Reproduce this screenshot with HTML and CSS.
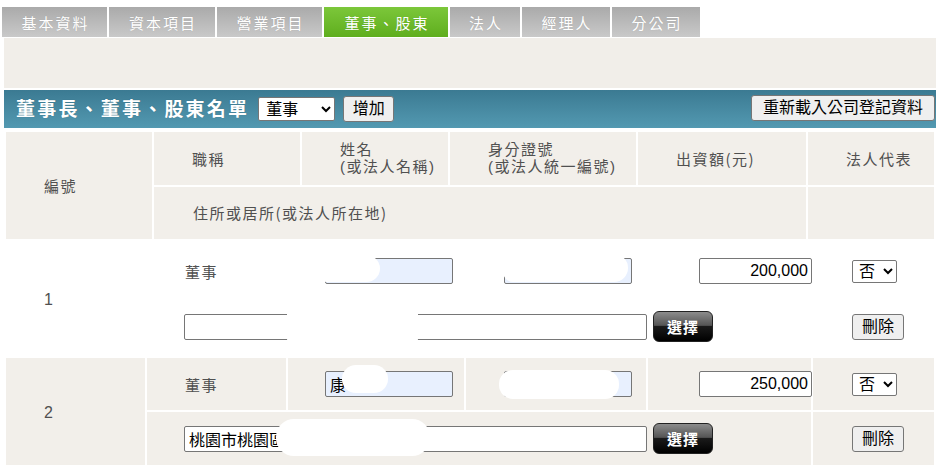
FILE: index.html
```html
<!DOCTYPE html>
<html lang="zh-Hant">
<head>
<meta charset="utf-8">
<title>董事、股東</title>
<link rel="stylesheet" href="styles.css">
</head>
<body>
<div class="tabs">
  <div class="tab tab-a">基本資料</div>
  <div class="tab tab-b">資本項目</div>
  <div class="tab tab-a">營業項目</div>
  <div class="tab tab-c tab-active">董事、股東</div>
  <div class="tab tab-d">法人</div>
  <div class="tab tab-e">經理人</div>
  <div class="tab tab-e">分公司</div>
</div>
<div class="main">
  <div class="band"></div>
  <div class="bar">
    <div class="bar-left">
      <span class="bar-title">董事長、董事、股東名單</span>
      <select class="sel sel-role"><option>董事</option></select>
      <button class="btn btn-add">增加</button>
    </div>
    <button class="btn btn-reload">重新載入公司登記資料</button>
  </div>
  <div class="table">
    <div class="head">
      <div class="hc hc-no">編號</div>
      <div class="hc">職稱</div>
      <div class="hc hc-2l">姓名<br>(或法人名稱)</div>
      <div class="hc hc-2l">身分證號<br>(或法人統一編號)</div>
      <div class="hc">出資額(元)</div>
      <div class="hc">法人代表</div>
      <div class="hc hc-addr">住所或居所(或法人所在地)</div>
      <div class="hc"></div>
    </div>

    <div class="rec rec-white rec-1">
      <div class="dc dc-no">1</div>
      <div class="dc">董事</div>
      <div class="dc"><input class="inp inp-name" value=""><span class="blob b1-name"></span></div>
      <div class="dc"><input class="inp inp-id" value=""><span class="blob b1-id"></span></div>
      <div class="dc"><input class="inp inp-amt" value="200,000"></div>
      <div class="dc"><select class="sel sel-yn"><option>否</option></select></div>
      <div class="dc dc-addr"><input class="inp inp-addr" value=""><span class="blob b1-addr"></span><button class="btn-pick">選擇</button></div>
      <div class="dc dc-del"><button class="btn btn-del">刪除</button></div>
    </div>

    <div class="rec rec-gray rec-2">
      <div class="dc dc-no">2</div>
      <div class="dc">董事</div>
      <div class="dc"><input class="inp inp-name" value="康"><span class="blob b2-name"></span></div>
      <div class="dc"><input class="inp inp-id" value=""><span class="blob b2-id"></span></div>
      <div class="dc"><input class="inp inp-amt" value="250,000"></div>
      <div class="dc"><select class="sel sel-yn"><option>否</option></select></div>
      <div class="dc dc-addr"><input class="inp inp-addr" value="桃園市桃園區"><span class="blob b2-addr"></span><button class="btn-pick">選擇</button></div>
      <div class="dc dc-del"><button class="btn btn-del">刪除</button></div>
    </div>
  </div>
</div>
</body>
</html>
```
FILE: styles.css
```css
* { box-sizing: border-box; }
html, body { background: #fff; }
body {
  margin: 0;
  padding: 7px 0 0 2px;
  font-family: "Noto Sans CJK TC", "Noto Sans", sans-serif;
  color: #555;
}
.tabs { display: flex; gap: 2px; height: 30px; }
.tab {
  height: 30px;
  display: flex;
  align-items: center;
  justify-content: center;
  padding-left: 2px;
  color: #fff;
  font-size: 15px;
  letter-spacing: 2px;
  background: linear-gradient(#aaaaaa, #c9c9c9);
  text-shadow: 0 0 1px rgba(0,0,0,0.15);
}
.tab-a { width: 105px; }
.tab-b { width: 106px; }
.tab-c { width: 124px; }
.tab-d { width: 70px; }
.tab-e { width: 88px; }
.tab-active { background: linear-gradient(#7cc73a, #5fae1e); }
.main { margin: 1px 0 0 2px; width: 932px; }
.band { height: 50px; background: #f1eee9; }
.bar {
  margin-top: 2px;
  height: 38px;
  background: linear-gradient(#3b7a92, #5399b1);
  display: flex;
  align-items: center;
  justify-content: space-between;
  padding: 0 1px 0 12px;
}
.bar-left { display: flex; align-items: center; }
.bar-title {
  color: #fff;
  font-size: 19px;
  font-weight: bold;
  letter-spacing: 2.2px;
  margin-right: 9px;
  margin-top: -4px;
  text-shadow: 0 0 1px rgba(0,0,0,0.25);
}
.sel {
  font-family: "Liberation Sans", "Noto Sans CJK TC", sans-serif;
  font-size: 16px;
  color: #000;
  background: #fff;
  border: 1px solid #767676;
  border-radius: 2px;
  height: 24px;
  padding: 0 0 0 3px;
}
.sel-role { width: 77px; margin-right: 8px; }
.btn {
  font-family: "Liberation Sans", "Noto Sans CJK TC", sans-serif;
  font-size: 16px;
  color: #000;
  background: #efefef;
  border: 1px solid #767676;
  border-radius: 3px;
  height: 26px;
  padding: 0 7px;
  line-height: 22px;
}
.btn-add { width: 51px; padding: 0; }
.btn-reload { width: 184px; padding: 0; margin-top: -3px; }
.table { margin-top: 2px; padding: 2px; display: flex; flex-direction: column; gap: 2px; }
.head {
  display: grid;
  grid-template-columns: 146px 146px 146px 186px 168px 126px;
  grid-template-rows: 53px 52px;
  gap: 2px;
}
.hc {
  background: #f2efea;
  font-size: 15px;
  letter-spacing: 1.5px;
  line-height: 18px;
  color: #505050;
  padding-left: 38px;
  display: flex;
  align-items: center;
}
.hc-2l {
  font-family: "Liberation Sans", "Noto Sans CJK TC", sans-serif;
  line-height: 17px;
  padding-bottom: 2px;
}
.hc-no { grid-row: 1 / 3; }
.hc-addr { grid-column: 2 / 6; padding-left: 39px; }
.rec {
  display: grid;
  grid-template-columns: 139px 139px 176px 180px 163px 121px;
  gap: 2px;
}
.rec-1 { grid-template-rows: 60px 53px; }
.rec-2 { grid-template-rows: 52px 53px; }
.dc {
  position: relative;
  font-size: 15px;
  letter-spacing: 1.5px;
  color: #505050;
  padding-left: 38px;
  display: flex;
  align-items: center;
}
.rec-white .dc { background: #fff; }
.rec-gray .dc { background: #f2efea; }
.dc-no { grid-row: 1 / 3; font-family: "Liberation Sans", sans-serif; font-size: 16px; padding-top: 2px; }
.dc-addr { grid-column: 2 / 6; padding-left: 37px; }
.rec-1 .dc-addr, .rec-1 .dc-del { padding-bottom: 6px; }
.inp {
  font-family: "Liberation Sans", "Noto Sans CJK TC", sans-serif;
  font-size: 16px;
  color: #000;
  height: 26px;
  border: 1px solid #767676;
  border-radius: 2px;
  background: #fff;
  padding: 0 4px;
}
.inp-name, .inp-id { width: 128px; background: #e8f0fe; }
.dc .inp-name { margin-left: -1px; }
.inp-amt { width: 113px; text-align: right; margin-left: 13px; padding-right: 3px; }
.inp-addr { width: 463px; }
.sel-yn { width: 45px; height: 23px; margin-left: 1px; padding-left: 2px; }
.btn-del { width: 52px; padding: 0; margin-left: 1px; }
.btn-pick {
  margin-left: 6px;
  width: 60px;
  height: 31px;
  border: 1px solid #222;
  border-radius: 6px;
  background: linear-gradient(#8c8c8c 0%, #555 46%, #1a1a1a 50%, #000 100%);
  color: #fff;
  font-family: "Noto Sans CJK TC", sans-serif;
  font-size: 15px;
  font-weight: bold;
  letter-spacing: 1px;
  padding: 0;
}
.blob { position: absolute; background: #fff; border-radius: 14px; }
.b1-name { left: 36px; top: 14px; width: 56px; height: 27px; border-radius: 2px 14px 14px 2px; }
.b1-id { left: 37px; top: 13px; width: 125px; height: 28px; border-radius: 2px 14px 14px 10px; }
.b1-addr { left: 140px; top: 2px; width: 131px; height: 42px; border-radius: 8px; }
.b2-name { left: 54px; top: 7px; width: 46px; height: 28px; }
.b2-id { left: 33px; top: 12px; width: 120px; height: 29px; }
.b2-addr { left: 129px; top: 7px; width: 154px; height: 37px; border-radius: 18px; }
```
